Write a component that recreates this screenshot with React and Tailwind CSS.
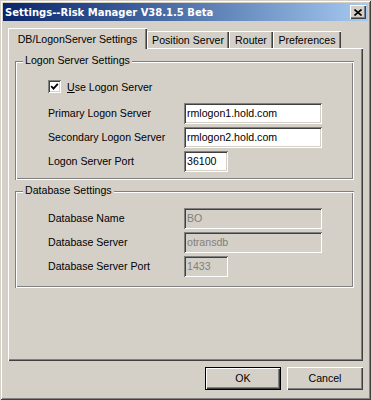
import { useState } from "react";

const raised =
  "shadow-[inset_1px_1px_#ffffff,inset_-1px_-1px_#404040,inset_-2px_-2px_#808080]";
const sunken =
  "shadow-[inset_1px_1px_#808080,inset_-1px_-1px_#ffffff,inset_2px_2px_#404040,inset_-2px_-2px_#d4d0c8]";
const etched =
  "shadow-[inset_1px_1px_#808080,inset_-1px_-1px_#ffffff,inset_2px_2px_#ffffff,inset_-2px_-2px_#808080]";

function GroupBox({ title, className, children }) {
  return (
    <div className={`relative ml-[7px] w-[339px] ${etched} ${className}`}>
      <span className="absolute left-[8px] top-[-7px] bg-[#d4d0c8] px-[2px]">
        {title}
      </span>
      {children}
    </div>
  );
}

function Field({ label, value, width, disabled }) {
  return (
    <div className="flex items-center">
      <span className="w-[136px]">{label}</span>
      <div
        className={`h-[21px] ${width} ${sunken} ${
          disabled ? "bg-[#d4d0c8] text-[#808080]" : "bg-white text-black"
        } flex items-center px-[3px]`}
      >
        {value}
      </div>
    </div>
  );
}

export default function App() {
  const [tab, setTab] = useState(0);
  const [useLogon, setUseLogon] = useState(true);

  const tabs = [
    { name: "DB/LogonServer Settings", w: "w-[139px]" },
    { name: "Position Server", w: "w-[82px]" },
    { name: "Router", w: "w-[44px]" },
    { name: "Preferences", w: "w-[68px]" },
  ];

  return (
    <div className="w-[371px] h-[400px] bg-[#d4d0c8] p-[3px] flex flex-col text-[10.6px] leading-[13px] text-black font-['Liberation_Sans',Arial,sans-serif] shadow-[inset_1px_1px_#d4d0c8,inset_-1px_-1px_#404040,inset_2px_2px_#ffffff,inset_-2px_-2px_#808080]">
      {/* Title bar */}
      <div className="h-[18px] flex items-center justify-between pl-[2px] pr-[2px] bg-linear-to-r from-[#0a246a] to-[#a6caf0]">
        <span className="text-white font-bold text-[10px] font-['DejaVu_Sans',sans-serif]">
          Settings--Risk Manager V38.1.5 Beta
        </span>
        <button
          className={`w-[16px] h-[14px] bg-[#d4d0c8] flex items-center justify-center ${raised}`}
        >
          <svg width="8" height="7" viewBox="0 0 8 7">
            <path d="M0.5 0.5 L7.5 6.5 M7.5 0.5 L0.5 6.5" stroke="#000" strokeWidth="1.6" />
          </svg>
        </button>
      </div>

      {/* Tabs */}
      <div className="mt-[7px] px-[5px]">
        <div className="flex items-end h-[20px]">
          {tabs.map((t, i) =>
            i === tab ? (
              <div
                key={t.name}
                onClick={() => setTab(i)}
                className={`${t.w} h-[21px] mb-[-1px] relative z-10 bg-[#d4d0c8] text-center pt-[5px] shadow-[inset_1px_1px_#ffffff,inset_-1px_0_#404040,inset_-2px_0_#808080]`}
              >
                {t.name}
              </div>
            ) : (
              <div
                key={t.name}
                onClick={() => setTab(i)}
                className={`${t.w} h-[17px] bg-[#d4d0c8] text-center pt-[3px] shadow-[inset_1px_1px_#ffffff,inset_-1px_0_#404040,inset_-2px_0_#808080]`}
              >
                {t.name}
              </div>
            )
          )}
        </div>

        {/* Panel */}
        <div
          className={`h-[313px] bg-[#d4d0c8] pt-[13px] flex flex-col ${raised}`}
        >
          <GroupBox title="Logon Server Settings" className="h-[119px] pt-[19px]">
            <div className="flex flex-col pl-[33px]">
              <label className="flex items-center h-[13px]">
                <span
                  onClick={() => setUseLogon(!useLogon)}
                  className={`w-[13px] h-[13px] bg-white flex items-center justify-center ${sunken}`}
                >
                  {useLogon && (
                    <svg width="9" height="9" viewBox="0 0 9 9">
                      <path d="M1.2 4.2 L3.5 6.6 L7.8 1.8" stroke="#000" strokeWidth="1.8" fill="none" />
                    </svg>
                  )}
                </span>
                <span className="ml-[6px] mt-[1px]">
                  <span className="underline">U</span>se Logon Server
                </span>
              </label>
              <div className="mt-[10px] flex flex-col gap-[3px]">
                <Field label="Primary Logon Server" value="rmlogon1.hold.com" width="w-[138px]" />
                <Field label="Secondary Logon Server" value="rmlogon2.hold.com" width="w-[138px]" />
                <Field label="Logon Server Port" value="36100" width="w-[44px]" />
              </div>
            </div>
          </GroupBox>

          <GroupBox title="Database Settings" className="mt-[11px] h-[97px] pt-[17px]">
            <div className="flex flex-col gap-[3px] pl-[33px]">
              <Field label="Database Name" value="BO" width="w-[138px]" disabled />
              <Field label="Database Server" value="otransdb" width="w-[138px]" disabled />
              <Field label="Database Server Port" value="1433" width="w-[44px]" disabled />
            </div>
          </GroupBox>
        </div>

        {/* Buttons */}
        <div className="mt-[6px] flex justify-end gap-[6px]">
          <button className="w-[76px] h-[23px] border border-black bg-[#d4d0c8] shadow-[inset_1px_1px_#ffffff,inset_-1px_-1px_#404040,inset_-2px_-2px_#808080]">
            OK
          </button>
          <button className={`w-[76px] h-[23px] bg-[#d4d0c8] ${raised}`}>
            Cancel
          </button>
        </div>
      </div>
    </div>
  );
}
